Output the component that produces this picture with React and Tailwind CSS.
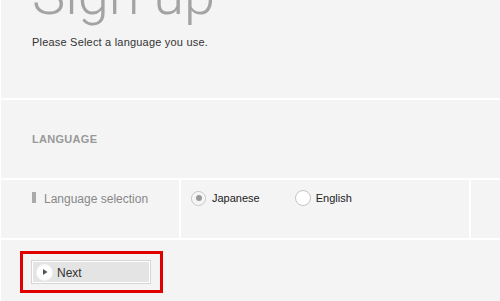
export default function App() {
  const small = { fontFamily: '"Liberation Sans", Arial, sans-serif' };

  return (
    <div className="w-[500px] h-[301px] overflow-hidden bg-white pl-[1px] flex flex-col gap-[2px]" style={small}>
      {/* Title block */}
      <div className="h-[98px] shrink-0 bg-[#f4f4f4] pl-[31px] overflow-hidden">
        <h1
          className="-mt-[33px] text-[56px] leading-none font-light text-[#a3a3a3]"
          style={{ fontFamily: "Roboto, sans-serif" }}
        >
          Sign up
        </h1>
        <p className="mt-[11px] text-[11px] tracking-[0.2px] text-[#333]">Please Select a language you use.</p>
      </div>

      {/* Section header */}
      <div className="h-[78px] shrink-0 bg-[#f4f4f4] pl-[31px] flex items-center">
        <span className="text-[11px] font-bold tracking-[0.3px] text-[#999]">LANGUAGE</span>
      </div>

      {/* Language row */}
      <div className="h-[58px] shrink-0 flex gap-[2px]">
        <div className="w-[178px] bg-[#f4f4f4] pl-[31px] pt-[12px] flex items-start gap-[8px]">
          <span className="w-[4px] h-[11px] bg-[#aaa]" />
          <span className="mt-[2px] text-[12px] leading-[11px] text-[#888]">Language selection</span>
        </div>
        <div className="w-[288px] bg-[#f4f4f4] pl-[10px] pt-[10px] flex items-start gap-[35px]">
          <label className="flex items-center gap-[6px] text-[11px] text-[#222]">
            <span className="w-[15px] h-[15px] rounded-full border border-[#c4c4c4] bg-[radial-gradient(circle,#f4f4f4_50%,#e6e6e6)] shadow-[inset_0_0_0_1px_#fff] flex items-center justify-center">
              <span className="w-[6px] h-[6px] rounded-full bg-[#9a9a9a]" />
            </span>
            Japanese
          </label>
          <label className="flex items-center gap-[5px] text-[11px] text-[#222]">
            <span className="w-[16px] h-[16px] rounded-full border border-[#c4c4c4] bg-white" />
            English
          </label>
        </div>
        <div className="flex-1 bg-[#f4f4f4]" />
      </div>

      {/* Actions */}
      <div className="flex-1 bg-[#f4f4f4] pl-[19px] pt-[11px]">
        <div className="w-[143px] h-[42px] border-[3px] border-[#e00000] pl-[8px] pt-[6px]">
          <button className="w-[120px] h-[24px] border border-[#d6d6d6] bg-[#e4e4e4] shadow-[inset_0_0_0_1px_#fff] flex items-center pl-[4px] gap-[4px] pt-[2px] text-[12px] text-[#333]">
            <span className="-mt-[2px] w-[17px] h-[17px] rounded-full bg-[radial-gradient(circle,#fff_55%,#eee_75%,#e4e4e4)] flex items-center justify-center">
              <svg width="6" height="6" viewBox="0 0 6 6">
                <path d="M1 0 L5.5 3 L1 6 Z" fill="#555" />
              </svg>
            </span>
            Next
          </button>
        </div>
      </div>
    </div>
  );
}
